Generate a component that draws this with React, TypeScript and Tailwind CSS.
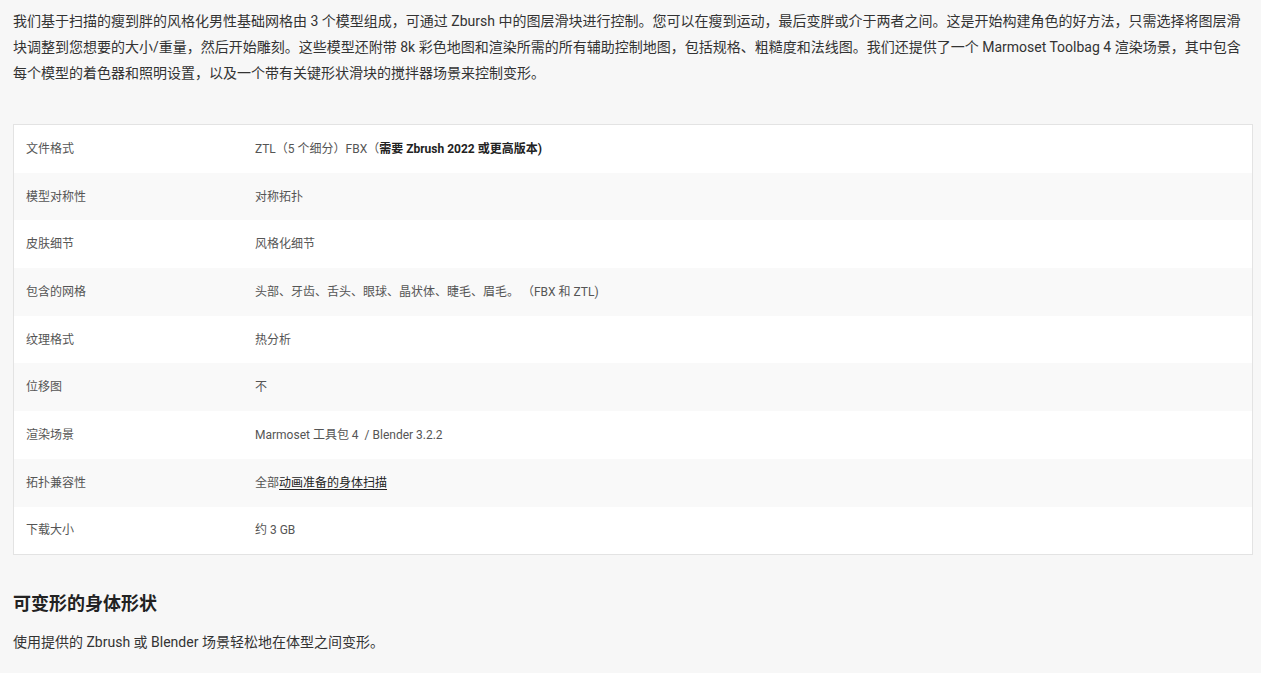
import React from 'react';

const rows: { label: string; value: React.ReactNode }[] = [
  {
    label: '文件格式',
    value: (
      <>
        ZTL（5 个细分）FBX（<b className="font-bold text-[#222]">需要 Zbrush 2022 或更高版本)</b>
      </>
    ),
  },
  { label: '模型对称性', value: '对称拓扑' },
  { label: '皮肤细节', value: '风格化细节' },
  { label: '包含的网格', value: '头部、牙齿、舌头、眼球、晶状体、睫毛、眉毛。 （FBX 和 ZTL)' },
  { label: '纹理格式', value: '热分析' },
  { label: '位移图', value: '不' },
  { label: '渲染场景', value: 'Marmoset 工具包 4\u00a0 / Blender 3.2.2' },
  {
    label: '拓扑兼容性',
    value: (
      <>
        全部<a className="text-[#222] underline underline-offset-2">动画准备的身体扫描</a>
      </>
    ),
  },
  { label: '下载大小', value: '约 3 GB' },
];

const App: React.FC = () => {
  return (
    <div
      className="min-h-screen bg-[#f7f7f7] pl-[13px] pr-[8px] pt-[8px] text-[#333]"
      style={{ fontFamily: 'Roboto, "Noto Sans CJK SC", sans-serif' }}
    >
      <p className="pr-[5px] text-[14px] leading-[26px]">
        我们基于扫描的瘦到胖的风格化男性基础网格由 3 个模型组成，可通过 Zbursh 中的图层滑块进行控制。您可以在瘦到运动，最后变胖或介于两者之间。这是开始构建角色的好方法，只需选择将图层滑块调整到您想要的大小/重量，然后开始雕刻。这些模型还附带 8k 彩色地图和渲染所需的所有辅助控制地图，包括规格、粗糙度和法线图。我们还提供了一个 Marmoset Toolbag 4 渲染场景，其中包含每个模型的着色器和照明设置，以及一个带有关键形状滑块的搅拌器场景来控制变形。
      </p>

      {/* Specs table */}
      <div className="mt-[38px] border border-[#e3e3e3] bg-white">
        {rows.map((row, i) => (
          <div
            key={i}
            className={`flex h-[47.7px] items-center text-[12px] text-[#555] ${i % 2 === 1 ? 'bg-[#f9f9f9]' : 'bg-white'}`}
          >
            <div className="w-[241px] flex-shrink-0 pl-[12px]">{row.label}</div>
            <div>{row.value}</div>
          </div>
        ))}
      </div>

      <h2 className="mt-[36px] text-[18px] font-bold leading-[26px] text-[#222]">可变形的身体形状</h2>
      <p className="mt-[12px] text-[14px] leading-[26px]">使用提供的 Zbrush 或 Blender 场景轻松地在体型之间变形。</p>
    </div>
  );
};

export default App;
